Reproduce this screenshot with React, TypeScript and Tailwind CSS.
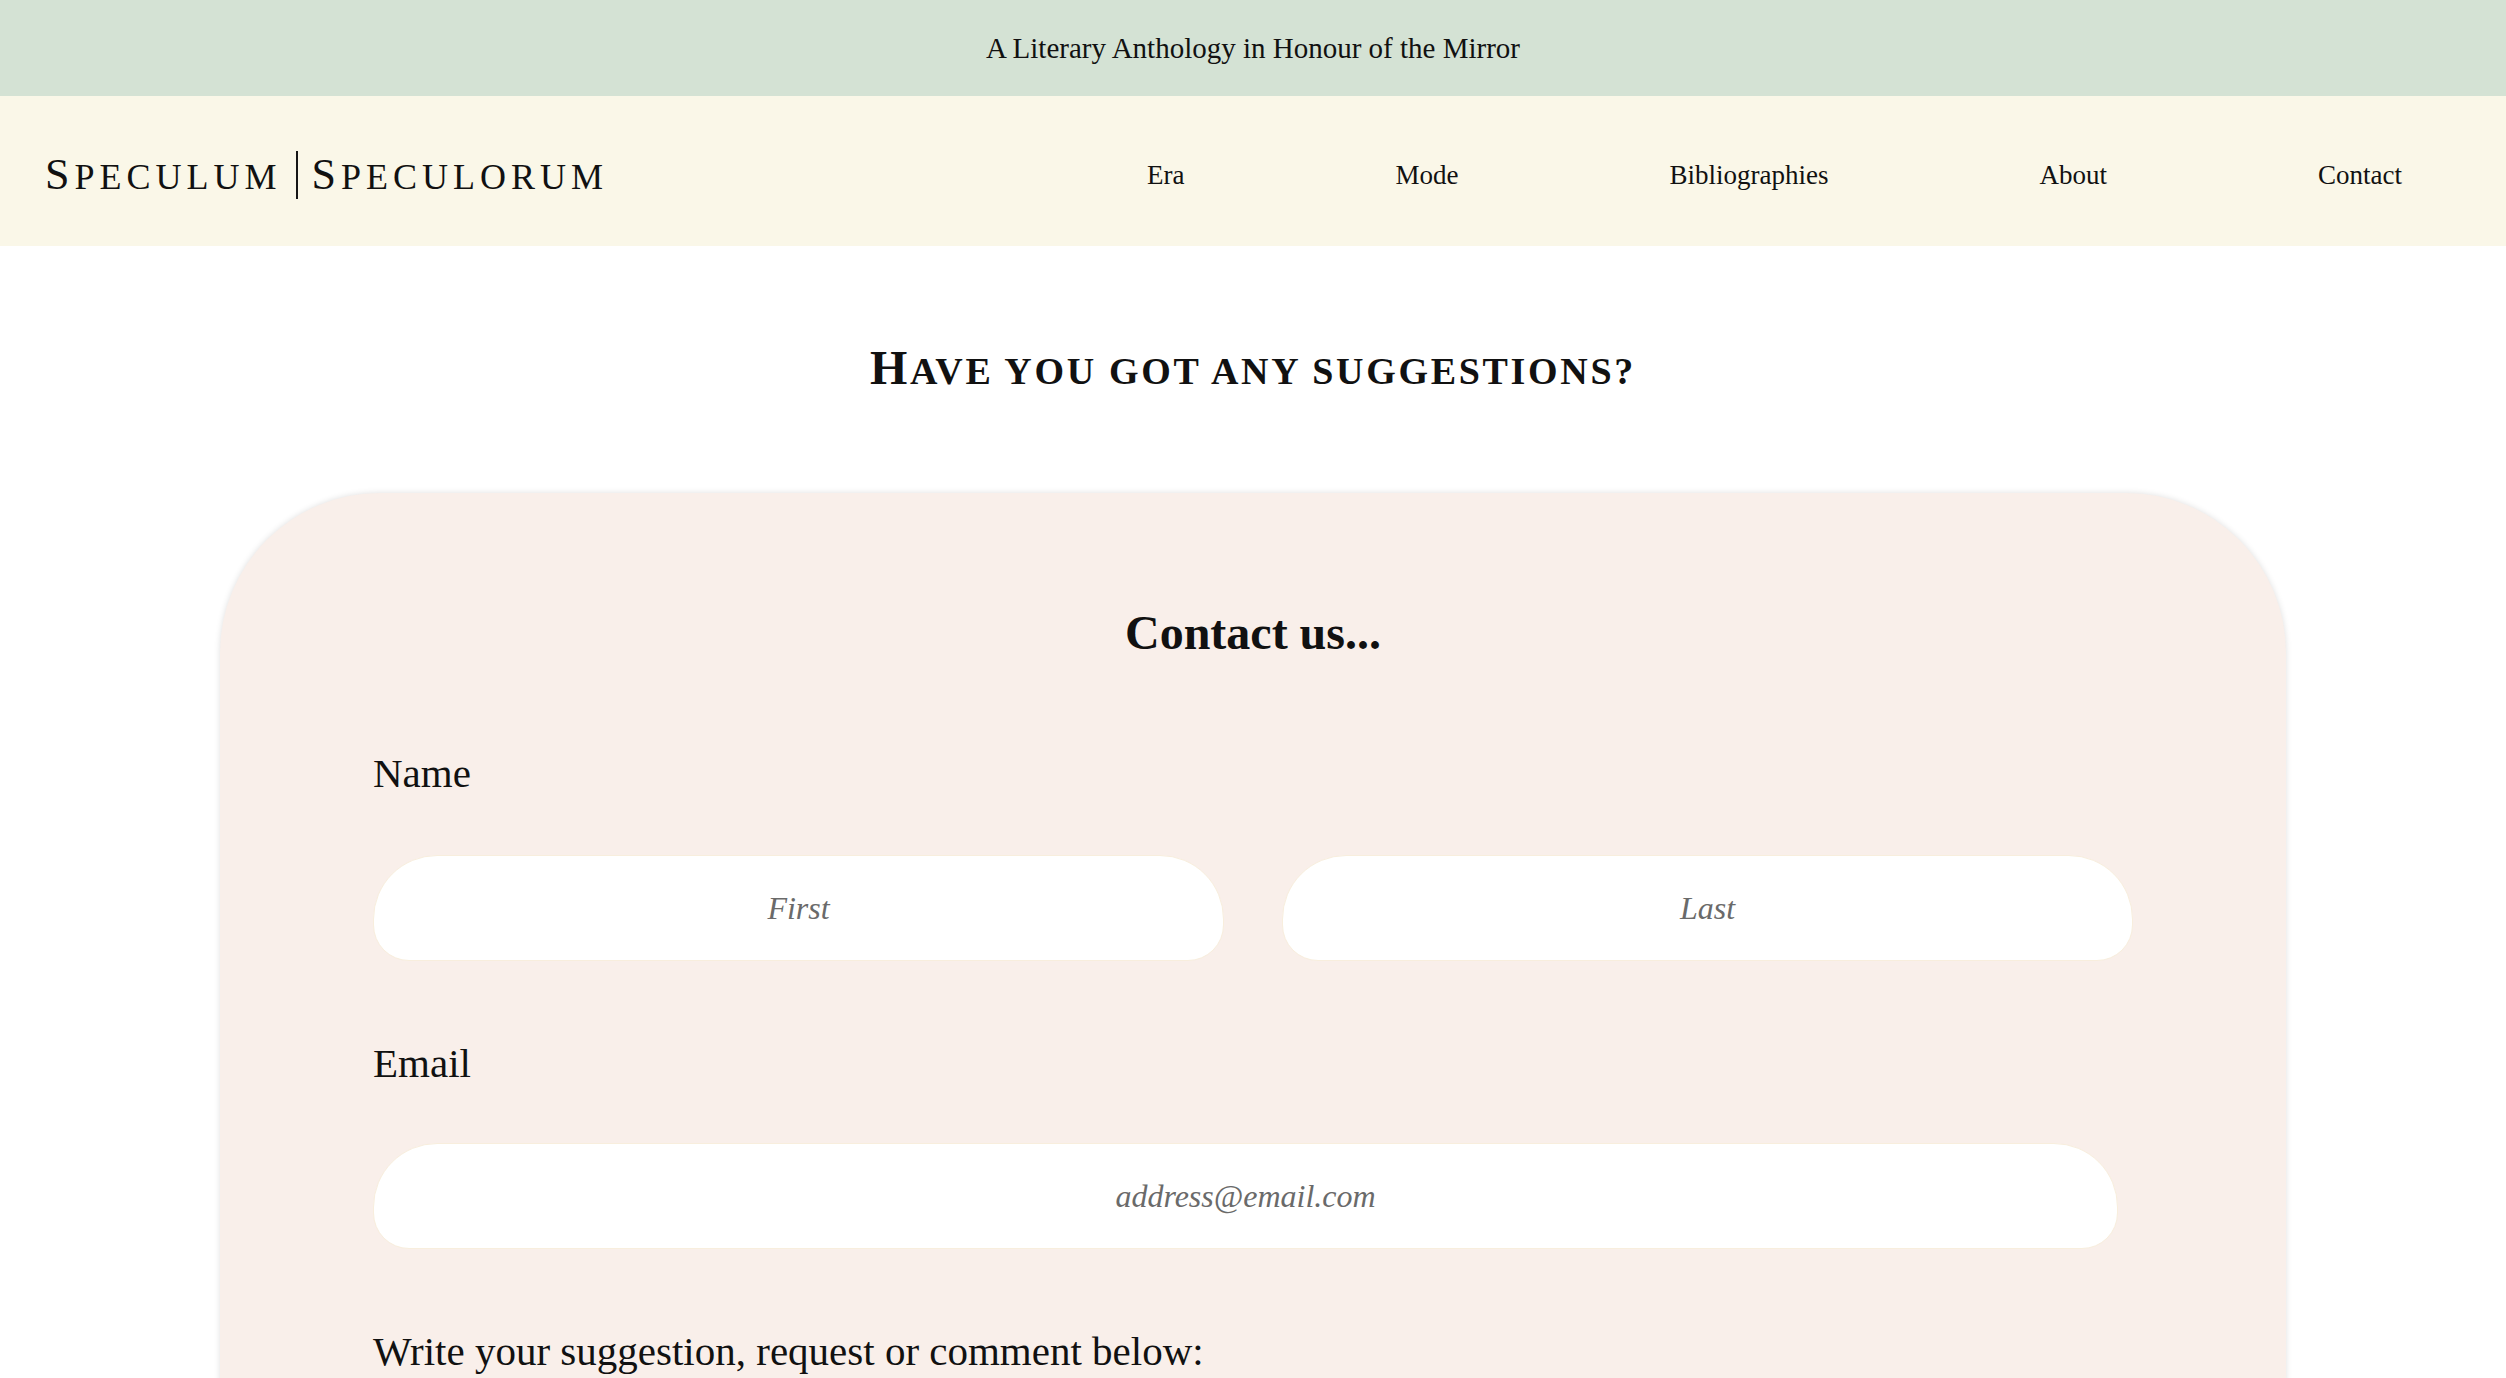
const serif = "font-['Liberation_Serif','Times_New_Roman',serif]";

function Logo() {
  return (
    <a href="#" className="flex items-center text-[#111] tracking-[5px] uppercase">
      <span className="leading-none">
        <span className="text-[44px]">S</span>
        <span className="text-[36px]">peculum</span>
      </span>
      <span className="mx-[14px] inline-block h-[48px] w-[2px] bg-[#161616]" />
      <span className="leading-none">
        <span className="text-[44px]">S</span>
        <span className="text-[36px]">peculorum</span>
      </span>
    </a>
  );
}

const navItems = ["Era", "Mode", "Bibliographies", "About", "Contact"];

function Field({ placeholder, className }: { placeholder: string; className: string }) {
  return (
    <input
      type="text"
      placeholder={placeholder}
      className={`h-[106px] rounded-t-[64px] rounded-b-[36px] border border-[#f8eedd] bg-white text-center text-[32px] text-[#222] outline-none placeholder:italic placeholder:text-[#6a6a6a] ${className}`}
    />
  );
}

export default function App() {
  return (
    <div className={`${serif} min-h-screen bg-white text-[#111]`}>
      {/* tagline strip */}
      <div className="flex h-[96px] items-center justify-center bg-[#d4e2d4]">
        <p className="text-[29px] leading-none">A Literary Anthology in Honour of the Mirror</p>
      </div>

      {/* site header */}
      <header className="flex h-[150px] items-center bg-[#faf7e8] pl-[45px] pr-[104px] pt-[8px]">
        <Logo />
        <nav className="ml-auto flex gap-[211px]">
          {navItems.map((item) => (
            <a key={item} href="#" className="text-[27px] leading-none hover:underline">
              {item}
            </a>
          ))}
        </nav>
      </header>

      <main className="pb-[120px]">
        <h2 className="mt-[98px] text-center font-bold uppercase tracking-[2.7px] text-[38px] leading-[48px]">
          <span className="text-[48px]">H</span>ave you got any suggestions?
        </h2>

        <section className="mx-[220px] mt-[98px] rounded-t-[160px] bg-[#f9efea] px-[153px] pb-[140px] pt-[116px] shadow-[0_0_6px_rgba(0,0,0,0.13)]">
          <h3 className="text-center text-[48px] font-bold leading-[48px]">Contact us...</h3>

          <form className="flex flex-col">
            <label className="mt-[96px] text-[41px] leading-[40px]">Name</label>
            <div className="mt-[62px] flex gap-[58px]">
              <Field placeholder="First" className="flex-1" />
              <Field placeholder="Last" className="flex-1" />
            </div>

            <label className="mt-[82px] text-[41px] leading-[40px]">Email</label>
            <Field placeholder="address@email.com" className="mt-[60px] w-[1745px]" />

            <label className="mt-[82px] text-[41px] leading-[40px]">
              Write your suggestion, request or comment below:
            </label>
            <textarea className="mt-[60px] h-[320px] resize-none rounded-[48px] border border-[#f8eedd] bg-white p-[32px] text-[32px] outline-none" />
            <button
              type="button"
              className="mx-auto mt-[70px] h-[96px] w-[360px] rounded-full bg-[#d4e2d4] text-[34px]"
            >
              Send
            </button>
          </form>
        </section>
      </main>
    </div>
  );
}
